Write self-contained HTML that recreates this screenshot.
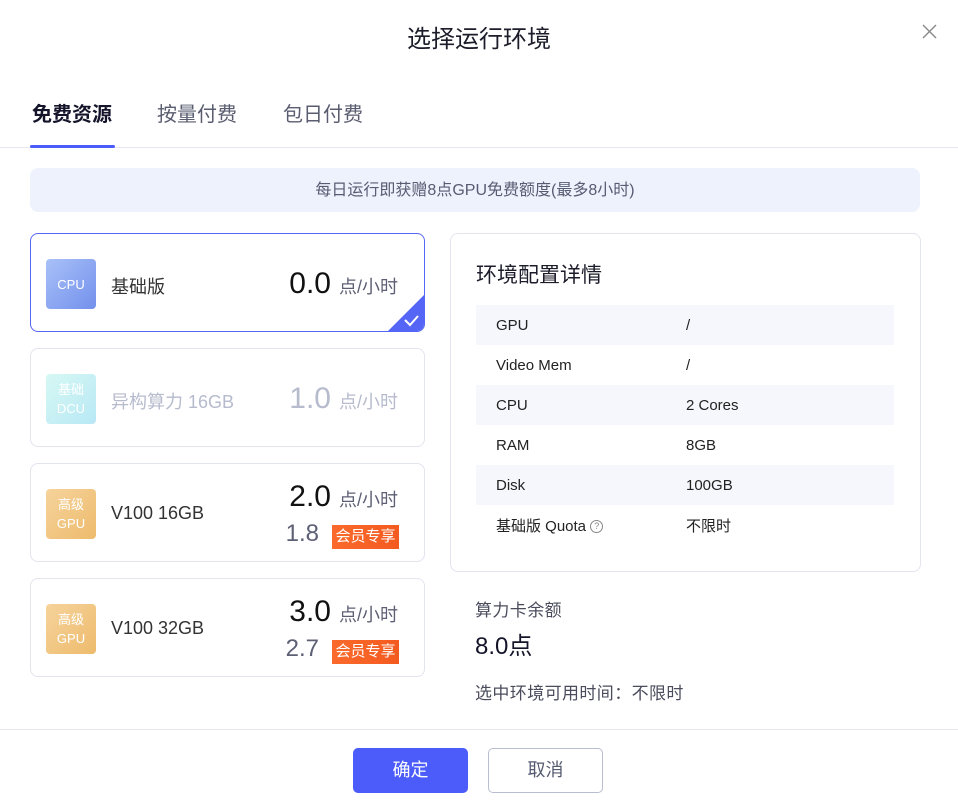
<!DOCTYPE html>
<html><head><meta charset="utf-8"><style>
*{box-sizing:border-box;margin:0;padding:0}
body{width:958px;height:810px;background:#fff;font-family:"Liberation Sans","Noto Sans CJK SC",sans-serif;position:relative;overflow:hidden;color:#222}
.abs{position:absolute}
.title{left:0;width:958px;top:19px;text-align:center;font-size:24px;color:#1c1c2a}
.tab{top:98px;font-size:20px;color:#5a5d70}
.card{left:30px;width:395px;height:99px;border:1px solid #e2e4ee;border-radius:8px;background:#fff}
.ic{left:15px;top:25px;width:50px;height:50px;border-radius:4px;color:#fff;font-size:13px;display:flex;align-items:center;justify-content:center;text-align:center;line-height:19px}
.nm{left:80px;font-size:18px;color:#333}
.pr{right:26px;font-size:30px;color:#111;white-space:nowrap}
.pr span{font-size:18px;color:#5d6075;margin-left:8px}
.old{right:105px;font-size:24px;color:#5d6075}
.badge{right:25px;width:67px;height:24px;background:linear-gradient(90deg,#fa6a2c,#f45a1f);color:#fff;font-size:15px;line-height:24px;text-align:center}
table{border-collapse:collapse;width:418px}
td{height:40px;font-size:15px;color:#222;padding-left:20px}
tr:nth-child(odd){background:#f6f7fc}
td:first-child{width:190px}
</style></head><body>
<div class="abs title">选择运行环境</div>
<svg class="abs" style="left:922px;top:24px" width="15" height="15" viewBox="0 0 15 15"><path d="M1 1L14 14M14 1L1 14" stroke="#888" stroke-width="1.4"/></svg>
<div class="abs tab" style="left:32px;font-weight:bold;color:#14142a">免费资源</div>
<div class="abs tab" style="left:157px">按量付费</div>
<div class="abs tab" style="left:283px">包日付费</div>
<div class="abs" style="left:0;top:147px;width:958px;height:1px;background:#e6e7ef"></div>
<div class="abs" style="left:30px;top:145px;width:85px;height:3px;border-radius:2px;background:#4b5cfb"></div>
<div class="abs" style="left:30px;top:168px;width:890px;height:44px;border-radius:8px;background:#eef2fd;text-align:center;line-height:46px;font-size:16px;color:#585c72">每日运行即获赠8点GPU免费额度(最多8小时)</div>

<div class="abs card" style="top:233px;border-color:#5566f6;overflow:hidden">
<div class="abs ic" style="background:linear-gradient(135deg,#a9c1f8,#7390ec)">CPU</div>
<div class="abs nm" style="top:39px">基础版</div>
<div class="abs pr" style="top:33px">0.0<span>点/小时</span></div>
<svg class="abs" style="right:-1px;bottom:-1px" width="38" height="38" viewBox="0 0 38 38"><path d="M38 0V30Q38 38 30 38H0Z" fill="#5566f6"/><path d="M18 26L23 31L31 22" stroke="#fff" stroke-width="2" fill="none"/></svg>
</div>
<div class="abs card" style="top:348px">
<div class="abs ic" style="background:linear-gradient(135deg,#d6f8f4,#b8e8f5);color:#fff">基础<br>DCU</div>
<div class="abs nm" style="top:39px;color:#b6bbcd">异构算力 16GB</div>
<div class="abs pr" style="top:33px;color:#b6bbcd">1.0<span style="color:#b6bbcd">点/小时</span></div>
</div>
<div class="abs card" style="top:463px">
<div class="abs ic" style="background:linear-gradient(135deg,#f6d39c,#edbb6c)">高级<br>GPU</div>
<div class="abs nm" style="top:39px">V100 16GB</div>
<div class="abs pr" style="top:16px">2.0<span>点/小时</span></div>
<div class="abs old" style="top:56px">1.8</div>
<div class="abs badge" style="top:61px">会员专享</div>
</div>
<div class="abs card" style="top:578px">
<div class="abs ic" style="background:linear-gradient(135deg,#f6d39c,#edbb6c)">高级<br>GPU</div>
<div class="abs nm" style="top:39px">V100 32GB</div>
<div class="abs pr" style="top:16px">3.0<span>点/小时</span></div>
<div class="abs old" style="top:56px">2.7</div>
<div class="abs badge" style="top:61px">会员专享</div>
</div>

<div class="abs" style="left:450px;top:233px;width:471px;height:339px;border:1px solid #e2e4ee;border-radius:8px">
<div class="abs" style="left:25px;top:25px;font-size:21px;color:#1c1c2a">环境配置详情</div>
<table class="abs" style="left:25px;top:71px">
<tr><td>GPU</td><td>/</td></tr>
<tr><td>Video Mem</td><td>/</td></tr>
<tr><td>CPU</td><td>2 Cores</td></tr>
<tr><td>RAM</td><td>8GB</td></tr>
<tr><td>Disk</td><td>100GB</td></tr>
<tr><td>基础版 Quota <span style="display:inline-block;width:13px;height:13px;border:1px solid #888;border-radius:50%;font-size:9px;line-height:11px;text-align:center;color:#888;vertical-align:middle">?</span></td><td>不限时</td></tr>
</table>
</div>
<div class="abs" style="left:475px;top:596px;font-size:17px;letter-spacing:0.4px;color:#4a4c5c">算力卡余额</div>
<div class="abs" style="left:475px;top:626px;font-size:24px;color:#14142a">8.0点</div>
<div class="abs" style="left:475px;top:679px;font-size:17px;letter-spacing:0.4px;color:#4a4c5c">选中环境可用时间：不限时</div>

<div class="abs" style="left:0;top:729px;width:958px;height:1px;background:#e6e7ef"></div>
<div class="abs" style="left:353px;top:748px;width:115px;height:45px;border-radius:5px;background:#4b5cfb;color:#fff;font-size:18px;text-align:center;line-height:45px">确定</div>
<div class="abs" style="left:488px;top:748px;width:115px;height:45px;border-radius:5px;border:1px solid #b9bdd0;color:#555a70;font-size:18px;text-align:center;line-height:43px">取消</div>
</body></html>
